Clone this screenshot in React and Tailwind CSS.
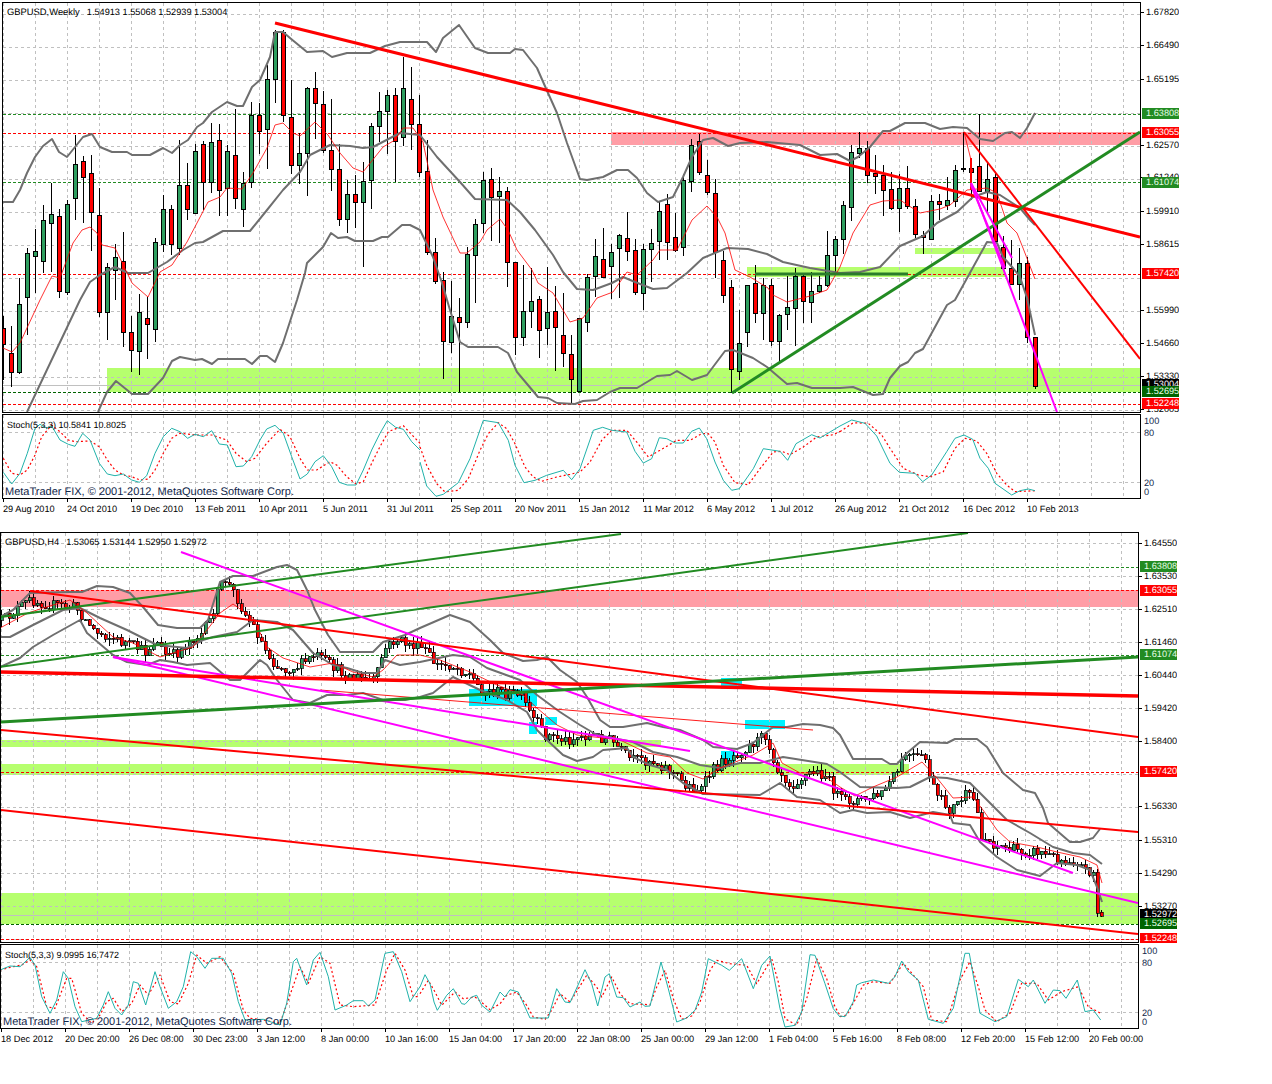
import React from "react";

const Z = (ox, oy, a) => {
  const out = [];
  for (let i = 0; i < a.length; i += 2) out.push(`${(ox + a[i] / 3).toFixed(1)},${(oy + a[i + 1] / 3).toFixed(1)}`);
  return out.join(" ");
};
const R = (a) => {
  const out = [];
  for (let i = 0; i < a.length; i += 2) out.push(`${a[i]},${a[i + 1]}`);
  return out.join(" ");
};

const GREEN = "#228b22";
const RED = "#ff0000";
const MAG = "#ff00ff";
const GRAY = "#6f6f6f";
const TEAL = "#20b2aa";
const LIME = "#b6ff6e";
const PINK = "#ff9da6";
const CYAN = "#00f2ff";

/* top chart candles: high, bodyTop, bodyBottom, low, colour */
const TOP_CANDLES = [
  [316,328,344,380,"r"],[326,353,372,387,"r"],[278,304,372,374,"g"],[248,253,297,335,"g"],[229,251,256,293,"g"],[205,220,261,273,"g"],[183,214,223,272,"g"],[209,216,291,298,"r"],[200,204,292,295,"g"],[135,164,198,220,"g"],
  [156,161,177,223,"r"],[155,173,212,251,"r"],[188,215,312,317,"r"],[263,267,312,340,"g"],[244,257,270,300,"g"],[232,261,332,347,"r"],[316,332,350,372,"r"],[294,312,351,375,"g"],[297,318,324,359,"r"],[238,242,329,342,"g"],
  [195,209,244,252,"g"],[205,209,244,255,"r"],[140,185,248,255,"g"],[163,185,209,220,"r"],[144,151,213,214,"g"],[141,144,182,210,"r"],[123,142,182,193,"g"],[124,140,190,216,"r"],[145,151,188,216,"g"],[109,155,198,209,"r"],
  [172,183,209,227,"g"],[102,115,182,188,"g"],[103,115,131,154,"r"],[65,79,129,169,"g"],[30,32,79,103,"g"],[30,32,115,122,"r"],[80,117,165,174,"r"],[133,153,165,184,"g"],[87,88,153,196,"g"],[72,88,103,139,"r"],
  [91,104,150,153,"r"],[99,150,169,191,"r"],[144,169,219,226,"r"],[180,194,219,233,"g"],[175,194,202,228,"r"],[162,181,202,267,"g"],[123,126,180,209,"g"],[92,111,126,142,"g"],[90,95,111,154,"g"],[88,95,141,182,"r"],
  [57,88,137,146,"g"],[67,99,124,150,"r"],[95,124,172,177,"r"],[140,171,252,255,"r"],[238,252,281,284,"r"],[272,280,341,379,"r"],[281,316,342,353,"g"],[298,317,322,392,"r"],[247,254,322,328,"g"],[219,224,255,303,"g"],
  [172,180,223,233,"g"],[168,179,197,241,"r"],[177,191,196,243,"g"],[187,191,262,287,"r"],[262,262,337,355,"r"],[265,311,337,346,"g"],[268,301,311,328,"g"],[296,299,330,358,"r"],[267,312,328,345,"g"],[286,311,327,371,"r"],
  [293,335,353,367,"r"],[335,354,379,404,"r"],[318,318,391,391,"g"],[274,277,322,332,"g"],[239,256,276,297,"g"],[228,259,277,278,"r"],[244,252,266,299,"g"],[234,235,248,298,"g"],[212,238,251,261,"r"],[239,250,292,295,"r"],
  [244,249,293,310,"g"],[229,243,249,282,"g"],[202,211,241,260,"g"],[194,204,242,260,"r"],[213,237,250,252,"r"],[174,180,247,256,"g"],[139,145,181,192,"g"],[134,141,172,175,"r"],[160,175,192,195,"r"],[179,193,252,278,"r"],
  [251,260,295,303,"r"],[280,287,369,393,"r"],[310,343,371,380,"g"],[285,285,332,347,"g"],[265,283,313,323,"r"],[278,285,313,340,"g"],[279,285,341,346,"r"],[314,315,341,362,"g"],[276,307,314,330,"g"],[268,276,308,346,"g"],
  [275,276,301,323,"r"],[272,291,302,323,"g"],[276,285,291,293,"g"],[231,255,285,287,"g"],[236,239,255,272,"g"],[201,205,239,254,"g"],[145,152,207,221,"g"],[132,148,153,158,"g"],[141,148,175,183,"r"],[155,173,176,194,"r"],
  [165,175,190,216,"r"],[172,189,208,210,"r"],[174,188,208,232,"g"],[166,188,206,209,"r"],[199,206,234,238,"r"],[231,235,237,254,"r"],[195,201,239,239,"g"],[194,201,204,220,"r"],[177,200,205,210,"g"],[165,170,201,207,"g"],
  [132,168,168,172,"g"],[158,168,172,200,"r"],[114,166,191,192,"r"],[163,179,191,213,"g"],[172,177,241,243,"r"],[236,247,268,270,"r"],[240,268,284,285,"r"],[248,263,284,300,"g"],[257,263,337,343,"r"],[337,337,386,389,"r"],
];

const topUpper = R([3,202,13,202,20,190,27,173,35,157,43,146,52,139,59,152,67,157,75,147,83,137,92,134,100,147,112,152,127,152,132,155,150,155,163,148,172,153,180,145,188,140,197,127,203,123,212,112,227,102,237,106,243,106,252,87,260,80,270,57,275,32,283,32,290,38,307,52,323,51,332,57,347,53,370,53,385,46,400,42,427,42,436,52,443,38,459,25,475,48,488,53,510,53,515,49,523,50,537,68,548,93,557,113,567,143,580,179,587,180,603,177,617,170,628,170,637,178,647,193,658,202,673,197,683,177,692,157,703,140,713,138,728,146,740,143,767,142,800,145,820,155,837,154,850,161,858,157,870,147,883,131,890,131,905,123,925,123,940,129,953,127,967,128,980,139,993,141,1005,133,1012,132,1020,138,1027,128,1035,113]);
const topMid = R([27,412,80,300,90,282,100,275,115,267,128,273,148,273,167,262,183,250,195,243,203,242,223,231,250,231,267,210,283,190,300,172,310,155,330,145,350,146,363,148,373,147,400,133,420,135,437,157,460,182,475,199,507,200,520,212,535,230,553,255,563,272,577,289,593,290,612,283,623,277,635,282,653,289,667,288,687,273,703,258,727,248,748,249,767,254,783,262,810,268,840,273,860,272,880,267,900,246,923,236,937,223,957,212,973,197,987,192,1000,195,1020,208,1030,220,1035,225]);
const topLower = R([98,412,107,392,116,381,132,394,148,394,163,378,172,361,180,357,195,360,202,359,212,364,218,359,245,359,252,364,260,356,267,356,275,362,283,343,297,300,305,273,307,263,323,247,331,233,338,238,347,237,355,241,373,241,382,237,388,237,402,225,410,225,420,230,433,257,442,283,450,310,460,342,468,347,498,347,508,353,517,372,538,397,548,398,557,403,575,404,583,401,597,400,610,392,620,388,637,388,657,376,670,375,677,371,692,380,707,375,725,351,733,350,753,358,767,367,787,384,797,383,812,388,840,388,853,387,873,395,883,394,890,378,900,366,908,362,915,353,923,349,947,305,955,300,987,242,997,243,1003,257,1013,268,1020,277,1027,298,1035,335]);
const topMA = R([3,348,12,352,20,343,40,300,52,276,60,278,73,243,82,230,90,227,97,233,102,245,115,248,132,283,148,297,160,272,172,265,187,242,208,202,220,197,227,188,242,189,253,173,267,148,275,125,283,123,293,133,300,136,315,122,328,135,340,153,353,168,363,172,383,147,395,140,403,128,413,128,423,142,433,190,443,217,460,253,467,253,480,242,487,230,500,219,508,230,517,250,532,270,538,283,553,293,570,322,583,318,597,298,613,292,627,272,637,275,653,260,660,250,677,250,692,220,707,206,717,217,725,233,735,270,750,277,768,288,773,295,787,302,810,296,827,290,840,267,853,233,870,205,883,201,900,200,920,213,940,209,950,205,967,190,987,188,997,193,1007,223,1017,233,1023,248,1035,279]);

const botUpper = R([0,617,13,610,30,593,70,592,82,592,97,586,113,587,130,593,143,607,158,625,177,628,200,628,208,620,220,582,233,576,253,576,277,567,287,565,297,570,307,590,315,610,328,635,340,652,373,652,383,642,405,635,420,628,450,615,470,622,490,640,503,653,523,661,537,660,547,657,560,670,577,682,587,697,600,720,610,727,623,727,647,723,663,727,680,730,703,740,713,747,737,749,753,743,773,727,787,727,803,724,820,725,833,728,840,735,853,759,882,759,890,764,897,764,907,753,920,742,947,743,955,739,977,739,987,747,1003,773,1023,790,1035,793,1043,808,1048,823,1070,842,1080,842,1093,838,1100,829]);
const botMid = R([0,637,10,637,33,625,63,610,80,608,100,618,127,630,157,645,187,648,203,640,213,637,237,632,253,620,277,622,293,630,313,653,333,665,347,668,363,673,377,673,385,660,400,665,420,662,453,655,470,657,487,668,520,680,537,695,560,712,580,725,597,735,633,742,653,752,677,757,700,765,720,768,740,763,760,763,783,757,827,764,840,772,860,787,897,788,910,787,930,777,947,778,970,783,987,800,1007,820,1030,833,1053,847,1073,853,1090,855,1102,864]);
const botLower = R([0,667,20,658,33,647,53,635,80,620,87,633,113,655,127,662,147,665,160,660,173,662,187,665,210,663,230,680,240,680,260,660,267,665,277,680,293,700,310,703,327,695,347,695,363,693,383,700,405,700,420,697,433,693,453,677,480,690,507,700,527,712,537,730,547,740,563,755,577,761,593,757,603,750,627,748,633,757,650,765,667,770,683,783,703,794,760,795,780,783,797,797,820,800,840,813,853,810,867,813,890,812,910,818,933,812,950,815,953,823,970,825,980,842,997,857,1017,870,1040,876,1057,863,1077,865,1090,870,1097,887,1102,902]);
const botMA = R([0,628,28,613,43,608,70,600,87,613,113,637,133,643,160,657,193,647,207,630,220,613,233,604,253,618,267,647,283,658,310,667,333,663,353,672,373,677,383,670,397,655,420,655,440,660,470,672,497,685,523,695,537,708,557,725,577,735,620,740,647,753,670,757,687,773,703,779,720,768,753,755,773,743,782,763,800,773,820,773,840,787,855,796,873,787,897,777,922,762,937,778,953,798,973,797,983,810,997,830,1010,842,1037,847,1057,852,1080,857,1097,865,1102,883]);

const pricePath = [3,620,13,612,30,600,50,605,75,607,85,620,95,632,105,635,115,640,130,645,145,652,155,640,165,655,175,655,190,640,200,635,210,620,218,590,225,580,235,595,245,615,255,630,265,650,275,665,285,670,300,665,315,655,330,665,345,675,360,678,375,680,383,650,395,640,410,645,425,650,435,665,450,665,470,675,480,690,500,692,520,695,530,715,545,735,565,740,590,735,610,740,630,760,650,760,670,770,685,785,700,790,712,770,725,760,745,748,765,735,775,765,790,785,810,772,825,775,840,800,860,800,880,795,895,775,905,755,925,760,935,795,950,810,965,795,975,800,980,835,995,845,1015,850,1040,852,1060,860,1075,860,1085,870,1095,872];
const priceAt = (x) => {
  for (let i = 0; i < pricePath.length - 2; i += 2) {
    if (x <= pricePath[i + 2]) {
      const t = Math.max(0, (x - pricePath[i]) / (pricePath[i + 2] - pricePath[i]));
      return pricePath[i + 1] + t * (pricePath[i + 3] - pricePath[i + 1]);
    }
  }
  return 872;
};
const BOT_CANDLES = (() => {
  let seed = 12345;
  const rnd = () => {
    seed = (seed * 16807) % 2147483647;
    return seed / 2147483647;
  };
  const out = [];
  let prev = priceAt(1);
  for (let k = 0; k < 274; k++) {
    const x = 1 + 4 * k;
    const close = priceAt(x) + (rnd() - 0.5) * 11;
    const top = Math.min(prev, close);
    const bot = Math.max(prev, close);
    out.push([x, top - rnd() * 7, top, Math.max(bot, top + 1), bot + rnd() * 7, close < prev ? "g" : "r"]);
    prev = close;
  }
  out.push([1097, 869, 872, 913, 917, "r"]);
  out.push([1101, 910, 912, 916, 917, "r"]);
  return out;
})();

const Grid = ({ xs, ys, x0, x1, y0, y1 }) => (
  <g stroke="#c0c0c0" strokeWidth="1" strokeDasharray="3 3" shapeRendering="crispEdges">
    {xs.map((x) => (
      <line key={`v${x}`} x1={x + 0.5} x2={x + 0.5} y1={y0} y2={y1} />
    ))}
    {ys.map((y) => (
      <line key={`h${y}`} x1={x0} x2={x1} y1={y + 0.5} y2={y + 0.5} />
    ))}
  </g>
);

const Level = ({ y, c, x0, x1 }) => (
  <line x1={x0} x2={x1} y1={y + 0.5} y2={y + 0.5} stroke={c} strokeDasharray="3 2" shapeRendering="crispEdges" />
);

const Line = ({ p, c, w }) => <line x1={p[0]} y1={p[1]} x2={p[2]} y2={p[3]} stroke={c} strokeWidth={w} />;
const Poly = ({ p, c, w, dash }) => (
  <polyline points={p} fill="none" stroke={c} strokeWidth={w} strokeDasharray={dash} strokeLinejoin="round" />
);

const candleFill = (c) => (c === "g" ? "#2e9e5f" : RED);

const TopMain = () => {
  const xs = Array.from({ length: 36 }, (_, i) => 3 + 32 * i);
  const ys = Array.from({ length: 13 }, (_, i) => 14 + 33 * i);
  return (
    <svg viewBox="3 3 1137 409" className="block w-full h-full">
      <rect x="611" y="132" width="529" height="13" fill={PINK} />
      <rect x="107" y="368" width="1033" height="24" fill={LIME} />
      <rect x="915" y="248" width="90" height="6" fill={LIME} />
      <rect x="747" y="267" width="258" height="10" fill={LIME} />
      <Grid xs={xs} ys={ys} x0={3} x1={1140} y0={3} y1={412} />
      <line x1="3" x2="1140" y1="385.5" y2="385.5" stroke="#c0c0c0" shapeRendering="crispEdges" />
      <Level y={114} c={GREEN} x0={3} x1={1140} />
      <Level y={133} c={RED} x0={3} x1={1140} />
      <Level y={182} c={GREEN} x0={3} x1={1140} />
      <Level y={274} c={RED} x0={3} x1={1140} />
      <Level y={392} c="#006400" x0={3} x1={1140} />
      <Level y={404} c={RED} x0={3} x1={1140} />
      <g shapeRendering="crispEdges">
        {TOP_CANDLES.map((d, k) => {
          const x = 3 + 8 * k;
          return (
            <g key={k}>
              <line x1={x + 0.5} x2={x + 0.5} y1={d[0]} y2={d[3]} stroke="#000" />
              <rect x={x - 1.5} y={d[1] + 0.5} width="4" height={Math.max(d[2] - d[1], 0.5)} fill={candleFill(d[4])} stroke="#000" />
            </g>
          );
        })}
      </g>
      <Poly p={topUpper} c={GRAY} w={2} />
      <Poly p={topMid} c={GRAY} w={2} />
      <Poly p={topLower} c={GRAY} w={2} />
      <Poly p={topMA} c={RED} w={0.8} />
      <Line p={[275, 23, 1140, 237]} c={RED} w={3} />
      <Line p={[964, 132, 1140, 359]} c={RED} w={2} />
      <Line p={[732, 393, 1140, 132]} c={GREEN} w={3} />
      <Line p={[755, 274, 908, 274]} c="#2a7d2a" w={3} />
      <Line p={[971, 158, 971, 190]} c={RED} w={2} />
      <Line p={[964, 132, 971, 160]} c={RED} w={0.8} />
      <Line p={[971, 183, 1057, 412]} c={MAG} w={2} />
      <Line p={[971, 183, 1012, 258]} c={MAG} w={2} />
      <Line p={[971, 185, 1005, 268]} c={MAG} w={2} />
    </svg>
  );
};

const TopStoch = () => {
  const xs = Array.from({ length: 36 }, (_, i) => 3 + 32 * i);
  return (
    <svg viewBox="3 415 1137 83" className="block w-full h-full">
      <Grid xs={xs} ys={[432, 482]} x0={3} x1={1140} y0={415} y1={498} />
      <Poly p={Z(0, 300, [10,475,35,520,60,525,82,510,105,465,125,410,155,375,180,395,205,420,225,425,270,423,298,440,322,480,345,510,370,525,395,530,420,540,445,537,465,510,490,460,515,415,540,400,585,405,635,405,680,420,708,460,740,485,765,475,800,430,840,388,870,410,900,475,922,510,950,510,990,485,1010,495,1040,530,1068,552,1090,545,1115,490,1140,440,1165,395,1210,377,1260,430])} c={RED} w={1.2} dash="2 2.5" />
      <Poly p={Z(420, 412, [0,105,20,160,50,215,75,240,115,235,145,200,180,115,205,65,235,32,260,50,285,95,315,165,340,195,365,208,410,195,450,187,480,180,510,150,545,85,575,55,620,55,650,90,685,135,720,115,770,85,810,85,845,65,865,65,885,90,910,160,945,212,985,218,1020,170,1060,120,1085,118,1110,128,1150,105,1190,75,1240,68,1260,58])} c={RED} w={1.2} dash="2 2.5" />
      <Poly p={Z(840, 300, [0,395,40,368,85,370,125,405,150,445,190,505,235,525,270,530,310,515,345,445,375,415,410,423,440,460,470,520,500,555,525,575,585,572])} c={RED} w={1.2} dash="2 2.5" />
      <Poly p={Z(0, 300, [10,517,35,552,60,520,82,460,105,385,120,373,140,385,155,378,180,420,205,433,225,439,248,400,270,420,298,490,322,522,345,527,370,522,395,540,418,547,440,527,465,460,490,410,515,385,540,395,563,415,585,403,610,410,635,392,658,432,682,435,708,500,730,498,755,470,780,420,800,387,825,376,850,400,875,470,900,537,922,522,945,485,970,467,995,500,1018,547,1042,555,1068,555,1090,510,1115,450,1140,400,1162,362,1187,382,1210,388,1235,425,1260,450])} c={TEAL} w={1} />
      <Poly p={Z(420, 412, [0,150,20,222,48,253,70,247,115,212,150,140,190,25,235,32,265,85,285,160,312,212,345,205,380,190,430,175,455,203,480,170,520,55,548,46,575,55,620,60,645,118,670,153,695,140,718,77,740,80,765,93,790,93,815,58,838,48,860,80,885,150,910,205,935,235,958,230,1000,170,1030,110,1080,118,1103,145,1128,95,1175,68,1200,78,1260,42])} c={TEAL} w={1} />
      <Poly p={Z(840, 300, [0,378,35,360,75,370,110,408,150,490,178,517,225,520,248,545,275,525,320,455,345,415,372,405,398,418,420,475,445,505,465,550,515,585,540,572,565,567,585,572])} c={TEAL} w={1} />
    </svg>
  );
};

const BotMain = () => {
  const xs = Array.from({ length: 36 }, (_, i) => 1 + 32 * i);
  const ys = Array.from({ length: 13 }, (_, i) => 543 + 33 * i);
  return (
    <svg viewBox="1 533 1137 409" className="block w-full h-full">
      <rect x="0" y="590" width="1138" height="17" fill={PINK} />
      <rect x="0" y="893" width="1138" height="31" fill={LIME} />
      <rect x="0" y="740" width="661" height="7" fill={LIME} />
      <rect x="0" y="764" width="909" height="11" fill={LIME} />
      <rect x="469" y="689" width="68" height="17" fill={CYAN} />
      <rect x="721" y="678" width="21" height="11" fill={CYAN} />
      <rect x="545" y="717" width="12" height="8" fill={CYAN} />
      <rect x="529" y="722" width="8" height="12" fill={CYAN} />
      <rect x="745" y="720" width="40" height="9" fill={CYAN} />
      <rect x="721" y="751" width="14" height="14" fill={CYAN} />
      <Grid xs={xs} ys={ys} x0={1} x1={1138} y0={533} y1={942} />
      <line x1="1" x2="1138" y1="915.5" y2="915.5" stroke="#c0c0c0" shapeRendering="crispEdges" />
      <Level y={567} c={GREEN} x0={1} x1={1138} />
      <Level y={590} c={RED} x0={1} x1={1138} />
      <Level y={655} c={GREEN} x0={1} x1={1138} />
      <Level y={772} c={RED} x0={1} x1={1138} />
      <Level y={924} c="#006400" x0={1} x1={1138} />
      <Level y={939} c={RED} x0={1} x1={1138} />
      <g shapeRendering="crispEdges">
        {BOT_CANDLES.map((d) => (
          <g key={d[0]}>
            <line x1={d[0] + 0.5} x2={d[0] + 0.5} y1={d[1]} y2={d[4]} stroke="#000" />
            <rect x={d[0] - 1} y={d[2]} width="3" height={Math.max(d[3] - d[2], 0.5)} fill={candleFill(d[5])} stroke="#000" strokeWidth="0.7" />
          </g>
        ))}
      </g>
      <Poly p={botUpper} c={GRAY} w={2} />
      <Poly p={botMid} c={GRAY} w={2} />
      <Poly p={botLower} c={GRAY} w={2} />
      <Poly p={botMA} c={RED} w={0.8} />
      <Line p={[320, 690, 813, 730]} c={RED} w={0.9} />
      <Line p={[0, 617, 621, 534]} c={GREEN} w={2} />
      <Line p={[0, 667, 968, 533]} c={GREEN} w={2} />
      <Line p={[181, 552, 1073, 873]} c={MAG} w={2} />
      <Line p={[113, 657, 690, 751]} c={MAG} w={2} />
      <Line p={[113, 657, 1138, 903]} c={MAG} w={2} />
      <Line p={[30, 591, 1138, 737]} c={RED} w={2} />
      <Line p={[0, 730, 1138, 832]} c={RED} w={2} />
      <Line p={[0, 810, 1138, 934]} c={RED} w={2} />
      <Line p={[0, 672, 1138, 696]} c={RED} w={3.5} />
      <Line p={[0, 722, 1138, 657]} c={GREEN} w={3} />
    </svg>
  );
};

const BotStoch = () => {
  const xs = Array.from({ length: 36 }, (_, i) => 1 + 32 * i);
  return (
    <svg viewBox="1 945 1137 83" className="block w-full h-full">
      <Grid xs={xs} ys={[962, 1012]} x0={1} x1={1138} y0={945} y1={1028} />
      <Poly p={Z(0, 930, [0,120,30,112,65,105,90,90,110,110,140,230,165,235,200,145,215,145,245,250,275,280,300,255,320,215,340,205,365,245,395,220,420,165,445,195,480,135,510,215,535,222,565,160,590,75,620,100,660,80,700,130,730,240,750,265,790,270,840,280,870,195,900,110,925,160,960,80,990,100,1020,225,1060,230,1125,225,1160,120,1185,70,1215,120,1240,200,1260,200])} c={RED} w={1.2} dash="2 2.5" />
      <Poly p={Z(420, 942, [0,155,25,115,45,150,65,190,85,170,105,150,130,170,165,165,190,185,210,203,240,185,260,160,290,150,320,190,340,225,375,232,395,205,420,155,450,180,500,100,530,135,545,165,575,105,600,155,630,185,690,188,710,135,735,85,760,170,785,232,815,222,840,180,870,85,890,55,930,65,980,70,1010,125,1055,50,1075,120,1095,230,1130,250,1160,170,1190,50,1220,110,1245,195,1260,220])} c={RED} w={1.2} dash="2 2.5" />
      <Poly p={Z(840, 800, [0,650,20,645,70,555,100,545,150,550,190,490,250,560,275,660,320,665,360,540,390,485,415,560,435,630,470,665,510,640,545,550,590,550,625,600,665,575,715,560,745,620,782,640])} c={RED} w={1.2} dash="2 2.5" />
      <Poly p={Z(0, 930, [0,120,30,108,60,110,90,82,105,105,125,200,150,250,170,210,190,125,205,145,225,230,245,275,290,265,310,225,325,185,345,235,365,255,385,225,400,155,415,160,437,225,465,125,480,170,505,235,530,215,550,170,572,65,590,80,615,115,635,85,670,85,695,130,715,215,735,270,790,268,840,285,860,220,880,95,890,85,920,165,940,90,960,67,985,140,1005,240,1040,225,1060,212,1090,212,1105,228,1125,210,1155,70,1180,65,1205,125,1230,215,1260,170])} c={TEAL} w={1} />
      <Poly p={Z(420, 942, [0,135,15,98,30,125,42,180,52,205,80,160,100,140,125,185,135,187,155,165,170,160,185,190,210,210,240,150,255,165,270,143,295,150,330,228,385,228,410,140,435,180,450,182,495,83,515,125,533,192,555,105,568,95,590,165,610,167,630,195,660,180,675,193,690,192,723,60,745,140,770,240,800,228,825,205,845,150,865,50,905,70,928,85,965,50,1000,140,1025,70,1050,42,1080,200,1095,255,1125,250,1145,210,1170,38,1185,40,1215,125,1240,200,1260,225])} c={TEAL} w={1} />
      <Poly p={Z(840, 800, [0,648,15,650,40,605,50,555,65,548,100,540,145,550,165,530,185,483,205,515,235,540,265,658,310,670,340,625,375,460,388,460,420,640,465,665,500,650,535,538,565,560,580,540,615,610,640,570,660,572,678,595,712,540,735,635,760,630,782,660])} c={TEAL} w={1} />
    </svg>
  );
};

/* a price label on the axis; top is the price's place on the scale */
const PriceLabel = ({ text, y, bg }) => (
  <div className="absolute left-0 flex items-center h-[11px]" style={{ top: bg ? y - 5.5 : Math.round(y - 5.5) }}>
    {bg ? (
      <div className={`ml-[1px] w-[37px] h-[11px] pl-[4px] text-[9.2px] leading-[11px] ${bg}`}>{text}</div>
    ) : (
      <>
        <div className="w-[3px] h-px bg-black" />
        <div className="ml-[2px] text-[9.2px] leading-[11px] text-black">{text}</div>
      </>
    )}
  </div>
);

const G = "bg-[#228b22] text-[#e8ffe8]";
const Rd = "bg-[#ff0000] text-white";
const K = "bg-black text-white";
const DG = "bg-[#006400] text-[#e8ffe8]";

const TOP_LABELS = [
  ["1.67820", 12], ["1.66490", 45], ["1.65195", 79], ["1.62570", 145], ["1.61240", 177], ["1.59910", 211], ["1.58615", 244], ["1.55990", 310], ["1.54660", 343], ["1.53330", 376], ["1.52005", 409],
  ["1.63808", 113.5, G], ["1.63055", 132.5, Rd], ["1.61074", 182, G], ["1.57420", 273.5, Rd], ["1.53004", 384, K], ["1.52695", 391.5, DG], ["1.52248", 403.5, Rd],
];
const BOT_LABELS = [
  ["1.64550", 543], ["1.63530", 576], ["1.62510", 609], ["1.61460", 642], ["1.60440", 675], ["1.59420", 708], ["1.58400", 741], ["1.56330", 806], ["1.55310", 840], ["1.54290", 873], ["1.53270", 906],
  ["1.63808", 566.5, G], ["1.63055", 590.5, Rd], ["1.61074", 654.5, G], ["1.57420", 771, Rd], ["1.52972", 914, K], ["1.52695", 923.5, DG], ["1.52248", 938, Rd],
];

const TOP_DATES = ["29 Aug 2010","24 Oct 2010","19 Dec 2010","13 Feb 2011","10 Apr 2011","5 Jun 2011","31 Jul 2011","25 Sep 2011","20 Nov 2011","15 Jan 2012","11 Mar 2012","6 May 2012","1 Jul 2012","26 Aug 2012","21 Oct 2012","16 Dec 2012","10 Feb 2013"];
const BOT_DATES = ["18 Dec 2012","20 Dec 20:00","26 Dec 08:00","30 Dec 23:00","3 Jan 12:00","8 Jan 00:00","10 Jan 16:00","15 Jan 04:00","17 Jan 20:00","22 Jan 08:00","25 Jan 00:00","29 Jan 12:00","1 Feb 04:00","5 Feb 16:00","8 Feb 08:00","12 Feb 20:00","15 Feb 12:00","20 Feb 00:00"];

const Chart = ({ ox, oy, title, titleLeft, stochTitle, main, stoch, labels, dates, copyLeft }) => (
  <section className="flex flex-col" style={{ marginLeft: ox }}>
    <div className="flex h-[411px]">
      <div className="relative w-[1139px] h-[411px] border border-black overflow-hidden shrink-0">
        {main}
        <div className={`absolute top-[3px] ${titleLeft} flex gap-[7px] leading-[12px] text-black whitespace-nowrap`}>
          <span className="text-[9.4px]">{title[0]}</span>
          <span className="text-[9.2px]">{title[1]}</span>
        </div>
      </div>
      <div className="relative w-[38px] h-[411px] overflow-hidden shrink-0">
        {labels.map((l) => (
          <PriceLabel key={l[0]} text={l[0]} y={l[1] - oy} bg={l[2]} />
        ))}
      </div>
    </div>
    <div className="flex h-[85px] mt-px">
      <div className="relative w-[1139px] h-[85px] border border-black overflow-hidden shrink-0">
        {stoch}
        <div className={`absolute top-[4px] ${titleLeft} text-[9px] leading-[12px] text-black whitespace-nowrap`}>{stochTitle}</div>
        <div className={`absolute -bottom-px ${copyLeft} text-[11px] leading-[14px] text-[#10264a] whitespace-nowrap`}>
          MetaTrader FIX, © 2001-2012, MetaQuotes Software Corp.
        </div>
      </div>
      <div className="relative w-[38px] h-[85px] pl-[3px] text-[9.2px] leading-[11px] text-[#10264a] shrink-0">
        <div className="pt-[2px]">100</div>
        <div className="mt-px">80</div>
        <div className="mt-[39px]">20</div>
        <div className="-mt-[2px]">0</div>
      </div>
    </div>
    <div className="flex pl-px h-[33px]">
      {dates.map((d) => (
        <div key={d} className="w-[64px] shrink-0">
          <div className="w-px h-[3px] bg-black" />
          <div className="text-[9.2px] leading-[11px] mt-[2px] text-black whitespace-nowrap">{d}</div>
        </div>
      ))}
    </div>
  </section>
);

export default function App() {
  return (
    <div className="w-[1272px] h-[1084px] bg-white pt-[2px] overflow-hidden font-['Liberation_Sans',Arial,sans-serif] [text-rendering:geometricPrecision]">
      <Chart
        ox={2}
        oy={2}
        title={["GBPUSD,Weekly", "1.54913 1.55068 1.52939 1.53004"]}
        titleLeft="left-[4px]"
        stochTitle="Stoch(5,3,3) 10.5841 10.8025"
        copyLeft="left-[2px]"
        main={<TopMain />}
        stoch={<TopStoch />}
        labels={TOP_LABELS}
        dates={TOP_DATES}
      />
      <Chart
        ox={0}
        oy={532}
        title={["GBPUSD,H4", "1.53065 1.53144 1.52950 1.52972"]}
        titleLeft="left-[4px]"
        stochTitle="Stoch(5,3,3) 9.0995 16.7472"
        copyLeft="left-[2px]"
        main={<BotMain />}
        stoch={<BotStoch />}
        labels={BOT_LABELS}
        dates={BOT_DATES}
      />
    </div>
  );
}
